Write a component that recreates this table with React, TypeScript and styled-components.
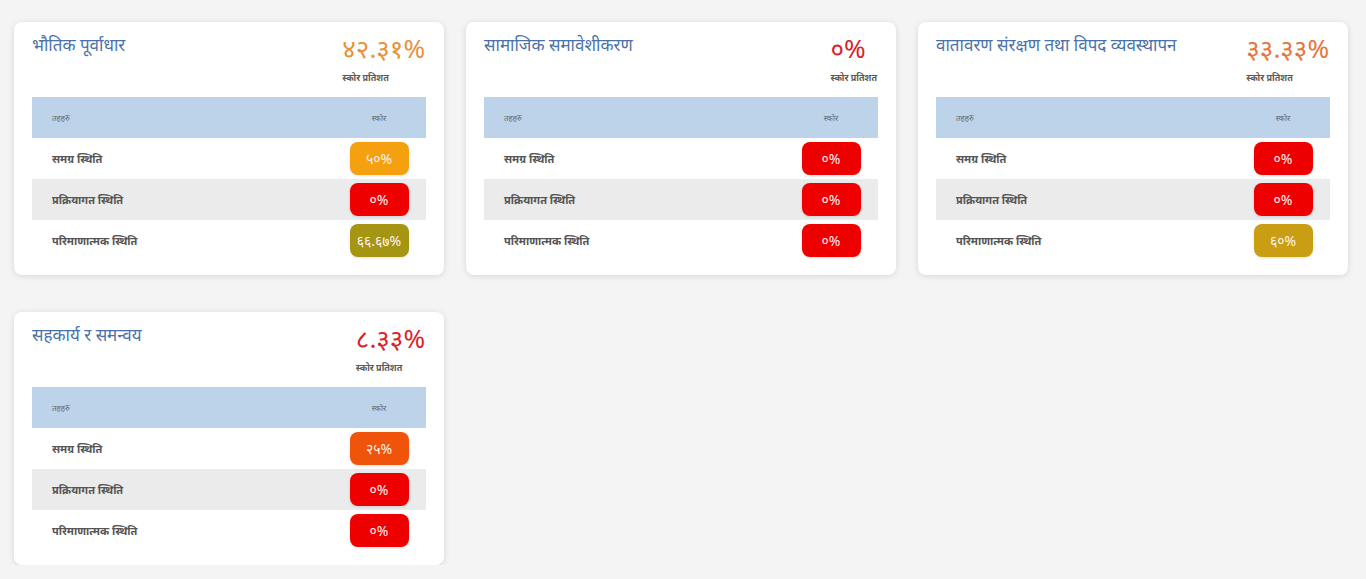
import React from 'react';
import styled, { createGlobalStyle } from 'styled-components';

const GlobalStyle = createGlobalStyle`
  html, body {
    margin: 0;
    padding: 0;
    background: #f4f4f4;
    font-family: "Noto Sans", "Liberation Sans", sans-serif;
  }
`;

const Page = styled.div`
  display: grid;
  grid-template-columns: repeat(3, 430px);
  column-gap: 22px;
  row-gap: 37px;
  padding: 22px 0 0 14px;
  align-items: start;
`;

const Card = styled.div`
  background: #ffffff;
  border-radius: 8px;
  box-shadow: 0 1px 6px rgba(0, 0, 0, 0.12);
  padding: 8px 18px 14px 18px;
`;

const CardHead = styled.div`
  display: flex;
  justify-content: space-between;
  align-items: flex-start;
  height: 67px;
`;

const Title = styled.div`
  color: #4b72a8;
  font-size: 17px;
  line-height: 26px;
  padding-top: 2px;
`;

const ScoreBox = styled.div`
  display: flex;
  flex-direction: column;
  align-items: flex-start;
  padding-right: 1px;
`;

const Score = styled.div<{ color: string }>`
  color: ${p => p.color};
  font-size: 26px;
  line-height: 34px;
  padding-top: 1px;
`;

const ScoreLabel = styled.div`
  color: #5a5a5a;
  font-size: 9px;
  font-weight: 700;
  line-height: 14px;
  margin-top: 6px;
`;

const Table = styled.div`
  display: flex;
  flex-direction: column;
`;

const Row = styled.div<{ shade?: string }>`
  display: grid;
  grid-template-columns: 1fr 94px;
  align-items: center;
  height: 41px;
  background: ${p => p.shade || 'transparent'};
  padding-left: 20px;
`;

const HeadCell = styled.div<{ center?: boolean }>`
  font-size: 8px;
  color: #666;
  text-align: ${p => (p.center ? 'center' : 'left')};
`;

const Label = styled.div`
  font-size: 11px;
  font-weight: 700;
  color: #555;
`;

const BadgeCell = styled.div`
  display: flex;
  justify-content: center;
`;

const Badge = styled.div<{ bg: string }>`
  width: 59px;
  height: 33px;
  border-radius: 8px;
  background: ${p => p.bg};
  color: #fff2f2;
  font-size: 14px;
  display: flex;
  align-items: center;
  justify-content: center;
  box-shadow: 0 1px 3px rgba(0, 0, 0, 0.12);
`;

type Item = { label: string; value: string; bg: string };
type Section = { title: string; score: string; color: string; items: Item[] };

const RED = '#ee0000';

const sections: Section[] = [
  {
    title: 'भौतिक पूर्वाधार',
    score: '४२.३१%',
    color: '#e8913a',
    items: [
      { label: 'समग्र स्थिति', value: '५०%', bg: '#f5a00f' },
      { label: 'प्रक्रियागत स्थिति', value: '०%', bg: RED },
      { label: 'परिमाणात्मक स्थिति', value: '६६.६७%', bg: '#a59512' },
    ],
  },
  {
    title: 'सामाजिक समावेशीकरण',
    score: '०%',
    color: '#d8232a',
    items: [
      { label: 'समग्र स्थिति', value: '०%', bg: RED },
      { label: 'प्रक्रियागत स्थिति', value: '०%', bg: RED },
      { label: 'परिमाणात्मक स्थिति', value: '०%', bg: RED },
    ],
  },
  {
    title: 'वातावरण संरक्षण तथा विपद व्यवस्थापन',
    score: '३३.३३%',
    color: '#e8743a',
    items: [
      { label: 'समग्र स्थिति', value: '०%', bg: RED },
      { label: 'प्रक्रियागत स्थिति', value: '०%', bg: RED },
      { label: 'परिमाणात्मक स्थिति', value: '६०%', bg: '#c99e12' },
    ],
  },
  {
    title: 'सहकार्य र समन्वय',
    score: '८.३३%',
    color: '#d8232a',
    items: [
      { label: 'समग्र स्थिति', value: '२५%', bg: '#f0530a' },
      { label: 'प्रक्रियागत स्थिति', value: '०%', bg: RED },
      { label: 'परिमाणात्मक स्थिति', value: '०%', bg: RED },
    ],
  },
];

const App = () => {
  return (
    <>
      <GlobalStyle />
      <Page>
        {sections.map(s => (
          <Card key={s.title}>
            <CardHead>
              <Title>{s.title}</Title>
              <ScoreBox>
                <Score color={s.color}>{s.score}</Score>
                <ScoreLabel>स्कोर प्रतिशत</ScoreLabel>
              </ScoreBox>
            </CardHead>
            <Table>
              <Row shade="#bdd3ea">
                <HeadCell>तहहरु</HeadCell>
                <HeadCell center>स्कोर</HeadCell>
              </Row>
              {s.items.map((it, i) => (
                <Row key={it.label} shade={i === 1 ? '#ebebeb' : undefined}>
                  <Label>{it.label}</Label>
                  <BadgeCell>
                    <Badge bg={it.bg}>{it.value}</Badge>
                  </BadgeCell>
                </Row>
              ))}
            </Table>
          </Card>
        ))}
      </Page>
    </>
  );
};

export default App;
